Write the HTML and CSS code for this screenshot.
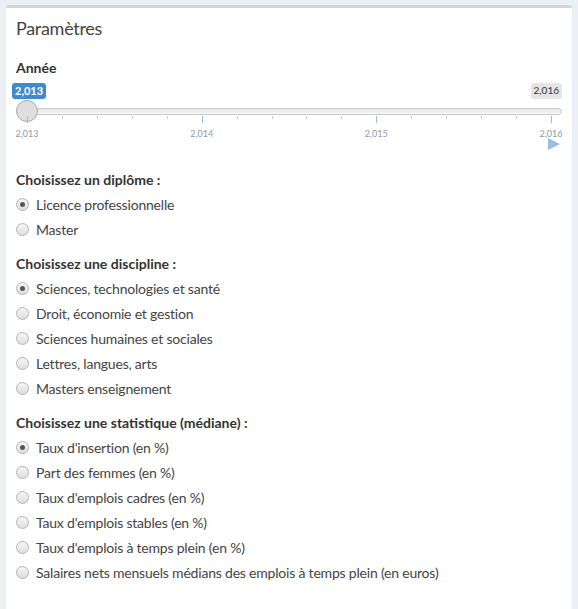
FILE: index.html
```html
<!DOCTYPE html>
<html lang="fr">
<head>
<meta charset="utf-8">
<title>Paramètres</title>
<link rel="stylesheet" href="styles.css">
</head>
<body>
<div class="box">
  <div class="box-header"><h3 class="box-title">Paramètres</h3></div>
  <div class="box-body">
    <div class="form-group slider-group">
      <label class="control-label">Année</label>
      <div class="irs">
        <div class="irs-labels">
          <span class="irs-single">2,013</span>
          <span class="irs-max">2,016</span>
        </div>
        <div class="irs-track">
          <div class="irs-line"></div>
          <div class="irs-handle"></div>
        </div>
        <div class="irs-grid">
          <span class="pol major" style="left:0%"></span>
          <span class="pol" style="left:6.667%"></span>
          <span class="pol" style="left:13.333%"></span>
          <span class="pol" style="left:20%"></span>
          <span class="pol" style="left:26.667%"></span>
          <span class="pol major" style="left:33.333%"></span>
          <span class="pol" style="left:40%"></span>
          <span class="pol" style="left:46.667%"></span>
          <span class="pol" style="left:53.333%"></span>
          <span class="pol" style="left:60%"></span>
          <span class="pol major" style="left:66.667%"></span>
          <span class="pol" style="left:73.333%"></span>
          <span class="pol" style="left:80%"></span>
          <span class="pol" style="left:86.667%"></span>
          <span class="pol" style="left:93.333%"></span>
          <span class="pol major" style="left:100%"></span>
          <span class="grid-text" style="left:0%">2,013</span>
          <span class="grid-text" style="left:33.333%">2,014</span>
          <span class="grid-text" style="left:66.667%">2,015</span>
          <span class="grid-text" style="left:100%">2,016</span>
        </div>
      </div>
      <div class="animate-row">
        <svg class="play" width="12" height="12" viewBox="0 0 12 12"><path d="M0 0 L12 6 L0 12 Z" fill="#9abedf"/></svg>
      </div>
    </div>

    <div class="form-group">
      <label class="control-label">Choisissez un diplôme :</label>
      <div class="radios">
        <div class="radio"><span class="rb checked"></span><span>Licence professionnelle</span></div>
        <div class="radio"><span class="rb"></span><span>Master</span></div>
      </div>
    </div>

    <div class="form-group">
      <label class="control-label">Choisissez une discipline :</label>
      <div class="radios">
        <div class="radio"><span class="rb checked"></span><span>Sciences, technologies et santé</span></div>
        <div class="radio"><span class="rb"></span><span>Droit, économie et gestion</span></div>
        <div class="radio"><span class="rb"></span><span>Sciences humaines et sociales</span></div>
        <div class="radio"><span class="rb"></span><span>Lettres, langues, arts</span></div>
        <div class="radio"><span class="rb"></span><span>Masters enseignement</span></div>
      </div>
    </div>

    <div class="form-group">
      <label class="control-label">Choisissez une statistique (médiane) :</label>
      <div class="radios">
        <div class="radio"><span class="rb checked"></span><span>Taux d'insertion (en %)</span></div>
        <div class="radio"><span class="rb"></span><span>Part des femmes (en %)</span></div>
        <div class="radio"><span class="rb"></span><span>Taux d'emplois cadres (en %)</span></div>
        <div class="radio"><span class="rb"></span><span>Taux d'emplois stables (en %)</span></div>
        <div class="radio"><span class="rb"></span><span>Taux d'emplois à temps plein (en %)</span></div>
        <div class="radio"><span class="rb"></span><span>Salaires nets mensuels médians des emplois à temps plein (en euros)</span></div>
      </div>
    </div>
  </div>
</div>
</body>
</html>
```

FILE: styles.css
```css
html, body {
  margin: 0;
  padding: 0;
}
body {
  background: #ecf0f5;
  font-family: Lato, "Open Sans", sans-serif;
  font-size: 14px;
  color: #333;
  padding: 5px 6px 0 6px;
  height: 604px;
  overflow: hidden;
}
.box {
  background: #fff;
  border-top: 3px solid #d2d6de;
  border-radius: 3px 3px 0 0;
  box-shadow: 0 1px 1px rgba(0,0,0,0.1);
  height: 620px;
}
.box-header {
  padding: 10px;
  height: 20px;
}
.box-title {
  margin: 0;
  font-size: 18px;
  line-height: 20px;
  font-weight: 400;
  color: #444;
  letter-spacing: -0.3px;
}
.box-body {
  padding: 10px;
}
.form-group {
  margin-bottom: 15px;
  display: flex;
  flex-direction: column;
}
.control-label {
  font-weight: 700;
  line-height: 20px;
  margin-bottom: 5px;
  color: #333;
}
.irs {
  position: relative;
  height: 55px;
}
.irs-labels {
  display: flex;
  justify-content: space-between;
  height: 16px;
  margin-left: -4px;
}
.irs-single {
  background: #428bca;
  color: #fff;
  font-size: 11px;
  font-weight: 700;
  line-height: 14px;
  padding: 1px 3px;
  border-radius: 3px;
}
.irs-max {
  background: rgba(0,0,0,0.1);
  color: #333;
  font-size: 10px;
  line-height: 12px;
  padding: 1px 3px;
  border-radius: 3px;
}
.irs-track {
  position: relative;
  height: 22px;
  margin-top: 1px;
}
.irs-line {
  position: absolute;
  left: 0;
  right: 0;
  top: 8px;
  height: 5px;
  border: 1px solid #cccccc;
  border-radius: 8px;
  background: linear-gradient(to bottom, #dddddd -50%, #ffffff 150%);
}
.irs-handle {
  position: absolute;
  left: 0;
  top: 0;
  width: 20px;
  height: 20px;
  border: 1px solid #ababab;
  border-radius: 50%;
  background: #dedede;
}
.irs-grid {
  position: absolute;
  left: 11px;
  right: 11px;
  top: 33px;
  height: 22px;
}
.pol {
  position: absolute;
  top: 0;
  width: 1px;
  height: 3px;
  background: #c8c8c8;
}
.pol.major {
  height: 7px;
  background: #9abedf;
}
.grid-text {
  position: absolute;
  top: 12px;
  font-size: 9px;
  line-height: 11px;
  color: #8f99a8;
  transform: translateX(-50%);
}
.animate-row {
  display: flex;
  justify-content: flex-end;
  height: 17px;
  padding-right: 2px;
}
.play {
  display: block;
}
.radios {
  display: flex;
  flex-direction: column;
  gap: 5px;
  margin-top: -1px;
}
.radio {
  display: flex;
  align-items: center;
  height: 20px;
  color: #444;
  letter-spacing: -0.2px;
}
.rb {
  box-sizing: border-box;
  width: 13px;
  height: 13px;
  border: 1px solid #b4b4b4;
  border-radius: 50%;
  background: linear-gradient(to bottom, #f6f6f6, #dedede);
  margin-right: 7px;
  position: relative;
  flex: none;
}
.rb.checked::after {
  content: "";
  position: absolute;
  left: 3px;
  top: 3px;
  width: 5px;
  height: 5px;
  border-radius: 50%;
  background: #555;
}
```
